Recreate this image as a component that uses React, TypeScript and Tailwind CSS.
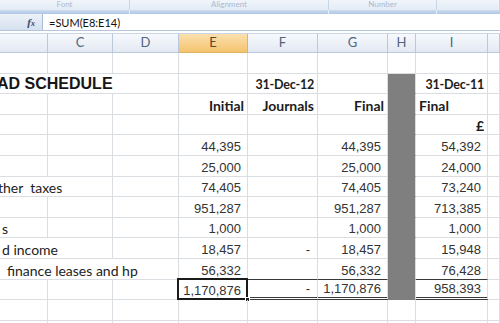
import React from 'react';

const arial = "font-['Liberation_Sans',Arial,sans-serif]";
const lato = "font-['Lato','Open_Sans',sans-serif]";

type CellProps = { w: string; className?: string; children?: React.ReactNode };

const Cell: React.FC<CellProps> = ({ w, className = '', children }) => (
  <div className={`${w} shrink-0 h-full border-r border-b border-[#dadde2] flex items-end justify-end ${className}`}>
    {children}
  </div>
);

const Num = ({ v }: { v: string }) => (
  <span className={`${arial} text-[13px] leading-[14px] text-[#333] pr-[6px] pb-[1px]`}>{v}</span>
);

const Dash = () => (
  <span className={`${arial} text-[13px] leading-[14px] text-[#333] pr-[7px] pb-[1px]`}>-</span>
);

const Head = ({ v, left = false }: { v: string; left?: boolean }) => (
  <span
    className={`${lato} font-bold text-[14px] leading-[15px] text-[#1c1c1c] pb-[1px] ${left ? 'mr-auto pl-[3px]' : 'pr-[3px]'}`}
  >
    {v}
  </span>
);

const DateHead = ({ v }: { v: string }) => (
  <span className={`${lato} font-bold text-[12.5px] leading-[15px] tracking-[-0.2px] text-[#1c1c1c] pb-[1px] pr-[3px]`}>
    {v}
  </span>
);

type RowProps = {
  label?: React.ReactNode;
  span?: 1 | 2 | 3;
  e?: React.ReactNode;
  f?: React.ReactNode;
  g?: React.ReactNode;
  i?: React.ReactNode;
  gray?: boolean;
  rule?: boolean;
  total?: boolean;
};

const Row: React.FC<RowProps> = ({ label, span = 1, e, f, g, i, gray = false, rule = false, total = false }) => {
  const spanW = span === 3 ? 'w-[179px]' : span === 2 ? 'w-[113px]' : 'w-[48px]';
  // rule = dark line under the cell (top of the total), total = double underline
  const lineCls = rule ? 'border-b-[#3a3a3a]' : total ? 'border-b-[3px] border-double border-b-[#3a3a3a]' : '';
  return (
    <div className="flex h-[20.6px]">
      <Cell w={spanW} className="justify-start overflow-visible">
        {label}
      </Cell>
      {span < 2 && <Cell w="w-[65px]" />}
      {span < 3 && <Cell w="w-[66px]" />}
      <Cell w="w-[69px]" className={`relative ${rule ? 'border-b-[#3a3a3a]' : ''}`}>
        {e}
        {total && (
          <>
            <div className="absolute -left-[2px] -top-[2px] -right-[1px] -bottom-[1px] border-2 border-[#1b1b1b]" />
            <div className="absolute -right-[3px] -bottom-[3px] w-[5px] h-[5px] bg-[#1b1b1b] border border-white" />
          </>
        )}
      </Cell>
      <Cell w="w-[70px]" className={lineCls}>{f}</Cell>
      <Cell w="w-[70px]" className={lineCls}>{g}</Cell>
      <Cell w="w-[28px]" className={gray ? 'bg-[#7f7f7f] border-b-[#7f7f7f]' : ''} />
      <Cell w="w-[72px]" className={lineCls}>{i}</Cell>
      <Cell w="flex-1" />
    </div>
  );
};

const Label = ({ v, pad }: { v: string; pad: string }) => (
  <span className={`${lato} text-[14px] leading-[15px] text-[#222] whitespace-pre pb-[1px] ${pad}`}>{v}</span>
);

const headers = [
  { w: 'w-[48px]', t: '' },
  { w: 'w-[65px]', t: 'C' },
  { w: 'w-[66px]', t: 'D' },
  { w: 'w-[69px]', t: 'E', on: true },
  { w: 'w-[70px]', t: 'F' },
  { w: 'w-[70px]', t: 'G' },
  { w: 'w-[28px]', t: 'H' },
  { w: 'w-[72px]', t: 'I' },
  { w: 'flex-1', t: '' },
];

export default function App() {
  return (
    <div className="w-[500px] h-[323px] overflow-hidden bg-white">
      {/* ribbon group labels */}
      <div className="flex h-[10px] bg-linear-to-b from-[#f1f5fb] to-[#e3ebf6] overflow-hidden">
        {[
          { w: 'w-[130px]', t: 'Font' },
          { w: 'w-[199px]', t: 'Alignment' },
          { w: 'w-[108px]', t: 'Number' },
          { w: 'flex-1', t: '' },
        ].map((gr) => (
          <div key={gr.t} className={`${gr.w} border-r border-[#c9d6e8] flex justify-center items-start`}>
            <span className={`${lato} text-[8px] leading-[9px] text-[#a9bad1]`}>{gr.t}</span>
          </div>
        ))}
      </div>
      <div className="flex h-[4px] bg-linear-to-b from-[#cddcf0] to-[#aec6e6]">
        <div className="w-[130px] border-r border-[#e6eef9]" />
        <div className="w-[199px] border-r border-[#e6eef9]" />
        <div className="w-[108px] border-r border-[#e6eef9]" />
        <div className="flex-1" />
      </div>

      {/* formula bar */}
      <div className="flex h-[17px] border-b border-[#b3c6de]">
        <div className="w-[43px] bg-linear-to-b from-[#edf2f9] to-[#d5e0ee] border-r border-[#a9bdd6] flex items-center justify-end pr-[7px]">
          <span className="font-['Liberation_Serif',serif] italic font-bold text-[11px] leading-none text-[#34496a]">
            f<span className="text-[8px]">x</span>
          </span>
        </div>
        <div className={`flex-1 flex items-center pl-[6px] ${lato} text-[11px] leading-none text-[#111]`}>=SUM(E8:E14)</div>
      </div>
      <div className="h-[2px] bg-white" />

      {/* column headers */}
      <div className="flex h-[20px] border-t border-[#c9d6e6]">
        {headers.map((h, k) => (
          <div
            key={k}
            className={`${h.w} shrink-0 border-r border-b flex items-center justify-center ${lato} text-[13px] ${
              h.on
                ? 'bg-linear-to-b from-[#fbe0ae] to-[#f4c46e] border-[#e2b462] text-[#5b4a2e]'
                : 'bg-linear-to-b from-[#f7f9fc] to-[#e3e9f2] border-[#b9c8da] text-[#52657f]'
            }`}
          >
            {h.t}
          </div>
        ))}
      </div>

      <Row />
      <Row
        span={3}
        label={
          <span className={`${arial} font-bold text-[16px] leading-[17px] text-[#161616] -ml-[3px] whitespace-nowrap pb-[1px]`}>
            AD SCHEDULE
          </span>
        }
        f={<DateHead v="31-Dec-12" />}
        i={<DateHead v="31-Dec-11" />}
        gray
      />
      <Row e={<Head v="Initial" />} f={<Head v="Journals" />} g={<Head v="Final" />} i={<Head v="Final" left />} gray />
      <Row i={<Head v="£" />} gray />
      <Row e={<Num v="44,395" />} g={<Num v="44,395" />} i={<Num v="54,392" />} gray />
      <Row e={<Num v="25,000" />} g={<Num v="25,000" />} i={<Num v="24,000" />} gray />
      <Row
        span={2}
        label={<Label v="ther  taxes" pad="-ml-[2px]" />}
        e={<Num v="74,405" />}
        g={<Num v="74,405" />}
        i={<Num v="73,240" />}
        gray
      />
      <Row e={<Num v="951,287" />} g={<Num v="951,287" />} i={<Num v="713,385" />} gray />
      <Row label={<Label v="s" pad="pl-[2px]" />} e={<Num v="1,000" />} g={<Num v="1,000" />} i={<Num v="1,000" />} gray />
      <Row
        span={2}
        label={<Label v="d income" pad="pl-[2px]" />}
        e={<Num v="18,457" />}
        f={<Dash />}
        g={<Num v="18,457" />}
        i={<Num v="15,948" />}
        gray
      />
      <Row
        span={3}
        label={<Label v="finance leases and hp" pad="pl-[7px]" />}
        e={<Num v="56,332" />}
        g={<Num v="56,332" />}
        i={<Num v="76,428" />}
        gray
        rule
      />
      <Row e={<Num v="1,170,876" />} f={<Dash />} g={<Num v="1,170,876" />} i={<Num v="958,393" />} gray total />
      <Row />
      <Row />
    </div>
  );
}
